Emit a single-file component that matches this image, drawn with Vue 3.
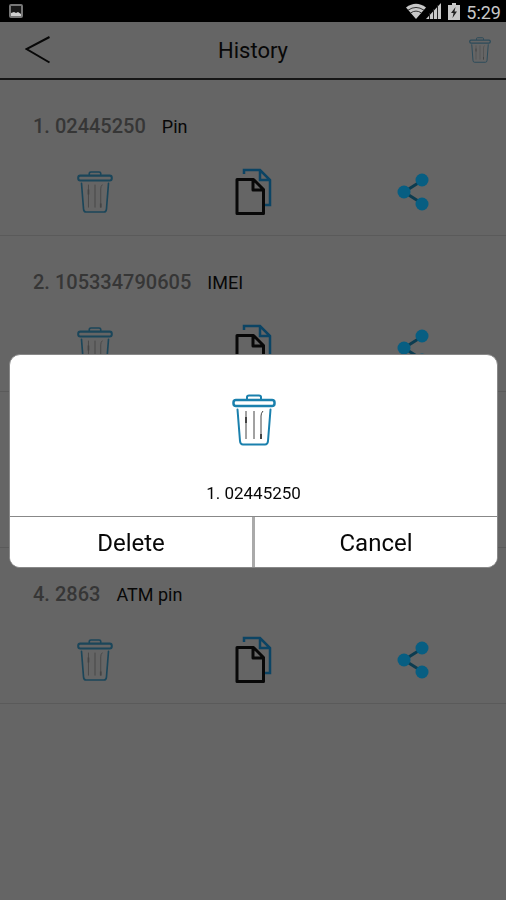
<script setup>
import { ref, computed } from 'vue';

const entries = ref([
  { id: 1, code: '02445250', label: 'Pin' },
  { id: 2, code: '105334790605', label: 'IMEI' },
  { id: 3, code: '7301', label: 'Code' },
  { id: 4, code: '2863', label: 'ATM pin' }
]);

const selectedId = ref(1);
const selected = computed(() => entries.value.find((item) => item.id === selectedId.value));

function askDelete(id) {
  selectedId.value = id;
}

function closeDialog() {
  selectedId.value = null;
}

function confirmDelete() {
  entries.value = entries.value.filter((item) => item.id !== selectedId.value);
  closeDialog();
}
</script>

<template>
  <div class="screen">
    <!-- shared icon shapes -->
    <svg class="sprite" aria-hidden="true">
      <symbol id="trash" viewBox="0 0 44 52">
        <g fill="none" stroke="currentColor" stroke-linejoin="round" stroke-linecap="round">
          <path d="M15 5V3q0-1.500 2-1.500h10q2 0 2 1.500v2" stroke-width="2" />
          <rect x="1.500" y="6" width="41" height="6" rx="2.500" stroke-width="2.500" />
          <path d="M5.500 15.500L8 47q.3 3.500 3 3.500h22q2.700 0 3-3.500l2.500-31.500" stroke-width="2" />
        </g>
        <g class="ribs" fill="none" stroke-width="1">
          <path d="M14 17v28M22 17v28M31 17q-2 2-2 5v23" />
          <path d="M14 23v6M29 40v5" stroke-width="2" />
        </g>
      </symbol>
      <symbol id="copy" viewBox="0 0 38 48">
        <path class="copy-back" d="M9 6V2h16l10 10v25h-5M25 2v10h10" fill="none" stroke-width="2.500" />
        <path d="M2 11.500h16.500l10 10V45.500H2zM18 12v10h10" fill="none" stroke="#080808" stroke-width="3" stroke-linejoin="round" />
      </symbol>
      <symbol id="share" viewBox="0 0 32 38">
        <path d="M26 7L7 19l19 12" fill="none" stroke="#0c3c50" stroke-width="3" />
        <g fill="currentColor">
          <circle cx="25" cy="7" r="6.500" />
          <circle cx="7" cy="19" r="6.500" />
          <circle cx="25" cy="31" r="6.500" />
        </g>
      </symbol>
    </svg>

    <div class="status">
      <svg class="status__picture" viewBox="0 0 14 14" width="14" height="14">
        <rect x="1" y="1" width="12" height="12" rx="1" fill="#181818" stroke="#777" stroke-width="2" />
        <path d="M2 12V9l3-1 2 1 2-1 3 2v2z" fill="#d0d0d0" />
      </svg>
      <svg viewBox="0 0 20 16" width="20" height="16">
        <path d="M0 4.500Q10-3 20 4.500L10 16z" fill="#c8c8c8" />
        <path d="M2 7.200q8-5.500 16 0M4.500 10q5.500-3.800 11 0" fill="none" stroke="#333" stroke-width="1" />
      </svg>
      <svg viewBox="0 0 16 16" width="16" height="16">
        <path d="M0 16L15 0v16z" fill="#c8c8c8" />
        <path d="M3.500 10v6M7.500 6v10M11.500 2v14" stroke="#222" stroke-width="1" />
      </svg>
      <svg class="status__battery" viewBox="0 0 12 17" width="12" height="17">
        <path d="M4 0h4v2h4v15H0V2h4z" fill="#c8c8c8" />
        <path d="M7.500 4L3 10h2.500L4.500 15 9 8.500H6.500z" fill="#222" />
      </svg>
      <span class="status__time">5:29</span>
    </div>

    <header class="header">
      <button class="icon-button" type="button" aria-label="Back">
        <svg viewBox="0 0 26 30" width="26" height="30">
          <path d="M24.500 2L1.500 14 24.500 27.500" fill="none" stroke="#080808" stroke-width="2" />
        </svg>
      </button>
      <h1 class="header__title">History</h1>
      <button class="icon-button header__clear" type="button" aria-label="Clear history">
        <svg width="22" height="28" preserveAspectRatio="none"><use href="#trash" /></svg>
      </button>
    </header>

    <ul class="list">
      <li v-for="item in entries" :key="item.id" class="entry">
        <div class="entry__text">
          <span class="entry__code">{{ item.id }}. {{ item.code }}</span>
          <span class="entry__label">{{ item.label }}</span>
        </div>
        <div class="entry__actions">
          <button class="icon-button entry__delete" type="button" aria-label="Delete entry" @click="askDelete(item.id)">
            <svg width="36" height="44"><use href="#trash" /></svg>
          </button>
          <button class="icon-button" type="button" aria-label="Copy">
            <svg width="38" height="48"><use href="#copy" /></svg>
          </button>
          <button class="icon-button entry__share" type="button" aria-label="Share">
            <svg width="32" height="38"><use href="#share" /></svg>
          </button>
        </div>
      </li>
    </ul>

    <div v-if="selected" class="overlay">
      <div class="dialog" role="dialog" aria-modal="true" aria-label="Delete entry">
        <div class="dialog__body">
          <svg class="dialog__icon" width="44" height="52"><use href="#trash" /></svg>
          <p class="dialog__text">{{ selected.id }}. {{ selected.code }}</p>
        </div>
        <div class="dialog__buttons">
          <button type="button" @click="confirmDelete">Delete</button>
          <button type="button" @click="closeDialog">Cancel</button>
        </div>
      </div>
    </div>
  </div>
</template>

<style>
body {
  background: #656565;
}
</style>

<style scoped>
.screen {
  min-height: 100vh;
  background: #656565;
  color: #080808;
  font-family: Roboto, "Liberation Sans", sans-serif;
}

.sprite {
  position: absolute;
  width: 0;
  height: 0;
}

svg {
  display: block;
}

.status {
  display: flex;
  align-items: center;
  height: 22px;
  padding: 0 5px 0 9px;
  background: #000;
  color: #c8c8c8;
}

.status__picture {
  margin-right: auto;
}

.status__battery {
  margin: 0 6px;
}

.status__time {
  font-size: 18px;
  line-height: 22px;
  padding-top: 4px;
}

.icon-button {
  display: flex;
  align-items: center;
  justify-content: center;
  padding: 0;
  border: 0;
  background: none;
  color: inherit;
  cursor: pointer;
}

.header {
  display: grid;
  grid-template-columns: 26px 1fr 26px;
  align-items: center;
  height: 56px;
  padding: 0 13px 0 25px;
  border-bottom: 2px solid #161616;
}

.header__title {
  margin: 0;
  padding: 2px 12px 0 0;
  font-size: 22px;
  font-weight: 400;
  line-height: 28px;
  text-align: center;
}

.header__clear {
  color: #2c4b5a;
}

.ribs {
  stroke: #444;
}

.copy-back {
  stroke: #0c4464;
}

.list {
  margin: 0;
  padding: 0;
  list-style: none;
}

.entry {
  box-sizing: border-box;
  height: 156px;
  padding-top: 34px;
  border-bottom: 1px solid #5a5a5a;
}

.entry__text {
  display: flex;
  align-items: baseline;
  gap: 16px;
  padding-left: 33px;
  line-height: 24px;
}

.entry__code {
  color: #363636;
  font-size: 20px;
  font-weight: 500;
}

.entry__label {
  font-size: 18px;
}

.entry__actions {
  display: grid;
  grid-template-columns: repeat(3, 1fr);
  padding: 29px 14px 0 16px;
}

.entry__delete {
  color: #1b465a;
}

.entry__share {
  color: #075e82;
}

.overlay {
  position: fixed;
  inset: 0;
  display: flex;
  align-items: center;
  justify-content: center;
  padding: 22px 8px 0 9px;
}

.dialog {
  flex: 1;
  overflow: hidden;
  border: 1px solid #888;
  border-radius: 11px;
  background: #fff;
}

.dialog__body {
  display: flex;
  flex-direction: column;
  align-items: center;
  padding: 39px 0 12px;
}

.dialog__icon {
  color: #1a80ad;
}

.dialog__text {
  margin: 36px 0 0;
  font-size: 17px;
  line-height: 22px;
}

.dialog__buttons {
  display: flex;
  border-top: 1px solid #888;
}

.dialog__buttons button {
  flex: 1;
  height: 50px;
  padding: 2px 0 0;
  border: 0;
  background: #fff;
  color: #080808;
  font-family: inherit;
  font-size: 24px;
  cursor: pointer;
}

.dialog__buttons button + button {
  border-left: 3px solid #aaa;
}
</style>
